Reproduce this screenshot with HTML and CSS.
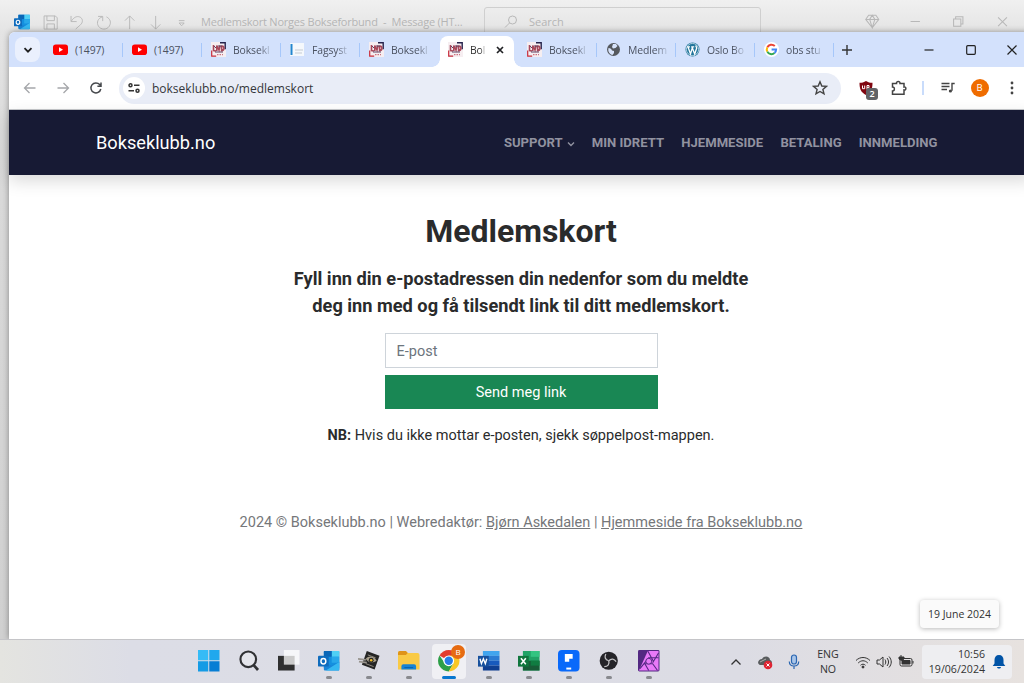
FILE: index.html
```
<!DOCTYPE html>
<html lang="no">
<head>
    <meta charset="utf-8">
    <title>Medlemskort - Bokseklubb.no</title>
    <link rel="stylesheet" href="styles.css">
</head>
<body>
    <svg class="defs" aria-hidden="true">
        <symbol id="youtube" viewBox="0 0 15 15">
            <rect x="0" y="2.5" width="15" height="10.5" rx="2.8" fill="#f00"/>
            <path d="M6 5.3 10 7.7 6 10z" fill="#fff"/>
        </symbol>
        <symbol id="boxing" viewBox="0 0 15 15">
            <path d="M0 0h15v15H0z" fill="#f6eef1"/>
            <path d="M9 .8h5.200v6.500" fill="none" stroke="#25234d" stroke-width="1.400"/>
            <path d="M.7 8.500v5.700h4.500" fill="none" stroke="#c62b3a" stroke-width="1.200"/>
            <path d="M2.500 3v5.500l2.500.5M5.800 9V3.500L8 8l1-4.500M10.600 3.600v5c3 0 3-4.500.5-4.500" fill="none" stroke="#a8485a" stroke-width="1.600"/>
            <path d="M3 4l2 2M7 4h4M4 10h8" stroke="#5d4161"/>
            <path d="M6 12.700h6" stroke="#c05565" stroke-dasharray="1.500 1"/>
        </symbol>
        <symbol id="outlook" viewBox="0 0 22 22">
            <rect x="6" y="1" width="16" height="18" rx="1.2" fill="#1490df"/>
            <path d="M14 1h8v6h-8z" fill="#50d0f5"/>
            <path d="M6 1h8v6H6z" fill="#0a67b7"/>
            <path d="M14 7h8v6h-8z" fill="#28a8ea"/>
            <path d="M6 12l8 4 8-4v8a1 1 0 0 1-1 1H7a1 1 0 0 1-1-1z" fill="#1784d8"/>
            <path d="M22 12v8a1 1 0 0 1-1 1H8z" fill="#35b8f1"/>
            <rect x="0" y="6" width="11" height="11" rx="1" fill="#0f6cbd"/>
            <ellipse cx="5.5" cy="11.5" rx="2.5" ry="2.8" fill="none" stroke="#fff" stroke-width="1.5"/>
        </symbol>
    </svg>

    <div class="desktop">
        <!-- Outlook window in the background -->
        <div class="mail-window">
            <div class="mail-tools">
                <svg class="mail-logo"><use href="#outlook"/></svg>
                <svg viewBox="0 0 16 16"><path d="M1 1h12l2 2v12H1zM4 1v5h8V1M4 15V9.500h8V15"/></svg>
                <svg viewBox="0 0 16 16"><path d="M2 1v6h6M2.300 6.500C5 2.500 8 1 11 2c4 1.500 4 6 1 8.500L7 15"/></svg>
                <svg viewBox="0 0 16 16"><path d="M2 1.500h5v5M6.500 2C2 3.500 0 8 2.500 12s9 4 11.500 0 1-8-3-10"/></svg>
                <svg viewBox="0 0 16 16"><path d="M8 15V1M3 6l5-5 5 5"/></svg>
                <svg viewBox="0 0 16 16"><path d="M8 1v14M3 10l5 5 5-5"/></svg>
                <svg viewBox="0 0 16 16"><path d="M5 6h6M5.300 8.500h5.400L8 11.500z"/></svg>
            </div>
            <div class="mail-title">Medlemskort Norges Bokseforbund&nbsp; -&nbsp; Message (HT...</div>
            <div class="mail-search">
                <svg viewBox="0 0 14 14"><circle cx="8.500" cy="5" r="4"/><path d="M5.500 8 1 12.500"/></svg>
                <span>Search</span>
            </div>
            <div class="mail-controls">
                <svg viewBox="0 0 14 14"><path d="M3.500 1h7L13.300 5 7 13 .7 5zM.7 5h12.600M4.500 5 7 13l2.500-8L7 1z"/></svg>
                <svg viewBox="0 0 14 14"><path d="M2.500 7h9"/></svg>
                <svg viewBox="0 0 14 14"><path d="M2.500 4.500h7v7h-7zM4.500 4V2.500h7v7H10"/></svg>
                <svg viewBox="0 0 14 14"><path d="M3 3l8.500 8.500M11.500 3 3 11.500"/></svg>
            </div>
        </div>

        <div class="browser">
            <div class="tab-strip">
                <button class="tab-search"><svg viewBox="0 0 10 10"><path d="M1.500 3.200 5 6.700l3.500-3.500"/></svg></button>
                <div class="tab"><svg class="favicon"><use href="#youtube"/></svg><span>(1497)</span></div>
                <div class="tab"><svg class="favicon"><use href="#youtube"/></svg><span>(1497)</span></div>
                <div class="tab"><svg class="favicon"><use href="#boxing"/></svg><span class="fade">Boksekl</span></div>
                <div class="tab">
                    <svg class="favicon" viewBox="0 0 15 15"><path d="M0 1h14v13H0z" fill="#f5f8fc"/><path d="M1.500 2v11" stroke="#2386cf" stroke-width="2"/><path d="M5 8h8M5 11h7" stroke="#c5cbd2"/></svg>
                    <span class="fade">Fagsyst</span>
                </div>
                <div class="tab before-active"><svg class="favicon"><use href="#boxing"/></svg><span class="fade">Boksekl</span></div>
                <div class="tab active">
                    <svg class="favicon"><use href="#boxing"/></svg><span class="fade">Bol</span>
                    <svg class="tab-close" viewBox="0 0 8 8"><path d="M1 1l6 6M7 1 1 7"/></svg>
                </div>
                <div class="tab"><svg class="favicon"><use href="#boxing"/></svg><span class="fade">Boksekl</span></div>
                <div class="tab">
                    <svg class="favicon" viewBox="0 0 15 15"><circle cx="7.500" cy="7.500" r="6.500" fill="#55595e"/><path d="M2.500 6c2 .2 3 1 3.500 2.500L8 9v2l-1.500 2C4 12.500 1.500 10 2.500 6zM7 2h3l1.500 2-2 2-2.500.5L6 5z" fill="#d7e3fa"/></svg>
                    <span class="fade">Medlem</span>
                </div>
                <div class="tab">
                    <svg class="favicon" viewBox="0 0 15 15"><circle cx="7.500" cy="7.500" r="7" fill="#21759b"/><circle cx="7.500" cy="7.500" r="6.100" fill="none" stroke="#e8f2f8" stroke-width=".7"/><path d="M2 4.800h3M6.200 4.800h3M3 5l2.500 7L7.300 6M7 5l2.700 7 2-6-1-2.500" fill="none" stroke="#fff" stroke-width="1.300"/></svg>
                    <span class="fade">Oslo Bo</span>
                </div>
                <div class="tab">
                    <svg class="favicon" viewBox="0 0 15 15"><circle cx="7.500" cy="7.500" r="7.500" fill="#fff"/><g fill="none" stroke-width="2"><path d="M10.800 4A4.700 4.700 0 0 0 3.300 5.400" stroke="#ea4335"/><path d="M3.300 5.400a4.700 4.700 0 0 0 0 4.200" stroke="#fbbc05"/><path d="M3.300 9.600a4.700 4.700 0 0 0 7.200 1.500" stroke="#34a853"/><path d="M10.500 11.100c1.200-1 1.600-2.200 1.600-3.500H7.600" stroke="#4285f4"/></g></svg>
                    <span class="fade">obs stu</span>
                </div>
                <svg class="new-tab" viewBox="0 0 12 12"><path d="M6 1v10M1 6h10"/></svg>
                <div class="window-controls">
                    <svg viewBox="0 0 12 12"><path d="M1.500 6h9"/></svg>
                    <svg viewBox="0 0 12 12"><rect x="1.700" y="1.700" width="8.600" height="8.600" rx="1"/></svg>
                    <svg viewBox="0 0 12 12"><path d="M1.500 1.500l9 9M10.500 1.500l-9 9"/></svg>
                </div>
            </div>

            <div class="toolbar">
                <svg class="nav-icon muted" viewBox="0 0 14 14"><path d="M12.500 7h-11M6.500 2l-5 5 5 5"/></svg>
                <svg class="nav-icon muted" viewBox="0 0 14 14"><path d="M1.500 7h11M7.500 2l5 5-5 5"/></svg>
                <svg class="nav-icon" viewBox="0 0 14 14"><path d="M11.800 8A5 5 0 1 1 10.700 3.600L12 5M12 1.500V5.200H8.400"/></svg>
                <div class="address-bar">
                    <div class="site-info"><svg viewBox="0 0 12 12"><circle cx="2.500" cy="3.300" r="1.500"/><path d="M6 3.300h5.500M.5 8.700H6"/><circle cx="9.500" cy="8.700" r="1.500"/></svg></div>
                    <span class="url">bokseklubb.no/medlemskort</span>
                    <svg class="star" viewBox="0 0 16 16"><path d="M8 1.800l1.800 4.200 4.600.4-3.500 3 1.100 4.500L8 11.500l-4 2.400 1.100-4.500-3.500-3 4.600-.4z"/></svg>
                </div>
                <div class="extensions">
                    <div class="ublock">
                        <svg viewBox="0 0 14 14"><path d="M7 0c2 1.300 4 1.800 6.500 1.800C13.500 8 12 11.500 7 14 2 11.500.5 8 .5 1.800 3 1.800 5 1.300 7 0z" fill="#800610"/><path d="M3.500 4.500v3.200h2.200V4.500M8 8.500v-4h2v2.200H8" fill="none" stroke="#fff"/></svg>
                        <span class="badge">2</span>
                    </div>
                    <svg class="puzzle" viewBox="0 0 16 16"><path d="M1.500 3.500h4C5 .8 9.500.8 9 3.500h4V7c2.500-.5 2.500 3.500 0 3v4.200H1.500V11c2.500-.2 2.500-4 0-4z"/></svg>
                    <i class="divider"></i>
                    <svg class="media" viewBox="0 0 14 14"><path d="M.5 2.500h8M.5 5.500h8M.5 8.500H6M11 9.800V2.500h2.700"/><circle cx="9.400" cy="10" r="1.600"/></svg>
                    <div class="avatar">B</div>
                    <svg class="dots" viewBox="0 0 4 14"><circle cx="2" cy="2" r="1.400"/><circle cx="2" cy="7" r="1.400"/><circle cx="2" cy="12" r="1.400"/></svg>
                </div>
            </div>

            <div class="page">
                <header class="site-header">
                    <a class="brand">Bokseklubb.no</a>
                    <nav class="menu">
                        <a>Support <svg viewBox="0 0 8 8"><path d="M1 2.500l3 3 3-3"/></svg></a>
                        <a>Min idrett</a>
                        <a>Hjemmeside</a>
                        <a>Betaling</a>
                        <a>Innmelding</a>
                    </nav>
                </header>
                <main>
                    <h1>Medlemskort</h1>
                    <h2>Fyll inn din e-postadressen din nedenfor som du meldte<br>deg inn med og få tilsendt link til ditt medlemskort.</h2>
                    <form class="card-form">
                        <input type="email" placeholder="E-post">
                        <button type="submit">Send meg link</button>
                    </form>
                    <p class="note"><b>NB:</b> Hvis du ikke mottar e-posten, sjekk søppelpost-mappen.</p>
                </main>
                <footer>2024 © Bokseklubb.no | Webredaktør: <u>Bjørn Askedalen</u> | <u>Hjemmeside fra Bokseklubb.no</u></footer>
            </div>
        </div>

        <div class="date-tooltip">19 June 2024</div>

        <div class="taskbar">
            <div class="apps">
                <div class="app"><svg viewBox="0 0 22 22"><g fill="#159be5"><path d="M0 0h10.500v10.500H0z" fill="#35bbf6"/><path d="M11.500 0H22v10.500H11.500z" fill="#20a8ed"/><path d="M0 11.500h10.500V22H0z"/><path d="M11.500 11.500H22V22H11.500z" fill="#087ed4"/></g></svg></div>
                <div class="app"><svg viewBox="0 0 22 22"><circle cx="10.500" cy="9.500" r="8" fill="#e4e5eb" stroke="#303134" stroke-width="2.200"/><path d="M16 15.500l4.500 5" stroke="#303134" stroke-width="2.800"/></svg></div>
                <div class="app"><svg viewBox="0 0 22 22"><path d="M0 6h17v15H0z" fill="#303030"/><path d="M6 0h16v15H6z" fill="#fff" opacity=".75"/></svg></div>
                <div class="app running"><svg viewBox="0 0 22 22"><use href="#outlook"/></svg></div>
                <div class="app running">
                    <svg viewBox="0 0 22 22"><path d="M9 1l13 5-5 14L4 15z" fill="#252525"/><path d="M8 9c3-4 9-3 11 2-4 3-9 2-11-2z" fill="#a9a08c"/><circle cx="13.500" cy="10.500" r="2.500" fill="#252525"/><circle cx="13.500" cy="10.500" r="1.300" fill="#f4be25"/><path d="M10 5l8 3M8 14l8 3" stroke="#8f8a80"/><path d="M0 9l8 1M1 12l8 1" stroke="#98948e" stroke-width="1.800"/></svg>
                </div>
                <div class="app running"><svg viewBox="0 0 22 22"><path d="M0 3a2 2 0 0 1 2-2h6l2 2h10a2 2 0 0 1 2 2v15H0z" fill="#f9ca45"/><path d="M0 3a2 2 0 0 1 2-2h6l2 2-2 2H0z" fill="#df9419"/><path d="M3.500 20v-3.500a2 2 0 0 1 2-2h11a2 2 0 0 1 2 2V20z" fill="#1684d4"/><path d="M6.500 18h9" stroke="#0761aa"/></svg></div>
                <div class="app running current">
                    <svg viewBox="0 0 22 22"><path d="M11 11 1.500 5.500A11 11 0 0 1 20.500 5.500z" fill="#e33b2e"/><path d="M1.500 5.500A11 11 0 0 0 11 22l5-8.500H7z" fill="#2d9f48"/><path d="M20.500 5.500A11 11 0 0 1 11 22l5-8.500L11 5.500z" fill="#fac724"/><circle cx="11" cy="11" r="5.500" fill="#fff"/><circle cx="11" cy="11" r="4.300" fill="#287ce5"/></svg>
                    <span class="profile-badge">B</span>
                </div>
                <div class="app running"><svg viewBox="0 0 22 22"><path d="M5 1h17v5H5z" fill="#41a5ee"/><path d="M5 6h17v5H5z" fill="#2b7cd3"/><path d="M5 11h17v5H5z" fill="#185abd"/><path d="M5 16h17v5H5z" fill="#103f91"/><path d="M0 6h11v11H0z" fill="#17509d"/><path d="M2 9l1.500 5 2-5 2 5L9 9" fill="none" stroke="#fff" stroke-width="1.400"/></svg></div>
                <div class="app running"><svg viewBox="0 0 22 22"><path d="M5 1h17v20H5z" fill="#21a366"/><path d="M13 1h9v6h-9z" fill="#33c481"/><path d="M5 11h17v10H5z" fill="#185c37"/><path d="M13 11h9v5h-9z" fill="#107c41"/><path d="M0 6h11v11H0z" fill="#10763d"/><path d="M3 8.500l5 6M8 8.500l-5 6" stroke="#fff" stroke-width="1.600"/></svg></div>
                <div class="app running"><svg viewBox="0 0 22 22"><rect width="22" height="22" rx="4" fill="#0969fa"/><path d="M7 4h8v5h-3.500v3H7z" fill="#fff"/><path d="M8.500 19h5" stroke="#fff" stroke-width="2"/></svg></div>
                <div class="app running"><svg viewBox="0 0 22 22"><circle cx="11" cy="11" r="9.300" fill="#252429"/><g fill="none" stroke="#c4c3c6" stroke-width="1.300"><path id="blade" d="M11 11c-4-1-4.500-4-3-7"/><use href="#blade" transform="rotate(120 11 11)"/><use href="#blade" transform="rotate(240 11 11)"/></g></svg></div>
                <div class="app running"><svg viewBox="0 0 22 22"><rect width="22" height="22" rx="1.500" fill="#532882"/><path d="M10 1h11v20H1z" fill="#e879f8"/><path d="M10 1l6 11M2 19l9-11h10M7 14l4 7M7 14h8l5 7M15 13l6-10" fill="none" stroke="#532882" stroke-width="1.100"/><circle cx="11" cy="11.500" r="3" fill="#e879f8" stroke="#532882"/></svg></div>
            </div>
            <div class="tray">
                <svg class="caret" viewBox="0 0 12 12"><path d="M1.500 8.500 6 4l4.500 4.500"/></svg>
                <svg class="cloud" viewBox="0 0 16 16"><path d="M3 11C-1 9 2 5 5 5c2-4 8-3 8 1 3 1 2 5 0 5z" fill="#595c5e"/><path d="M3 8l6-3" stroke="#b0b0b0"/><circle cx="11" cy="11" r="4.300" fill="#df2433"/><path d="M9.500 9.500l3 3M12.500 9.500l-3 3" stroke="#fff"/></svg>
                <svg class="mic" viewBox="0 0 12 16"><rect x="3.500" y="1" width="5" height="9" rx="2.500" fill="#a9c5e8"/><path d="M1.300 7.500c0 6 9.400 6 9.400 0M6 12v3"/></svg>
                <div class="language">ENG<br>NO</div>
                <svg class="wifi" viewBox="0 0 16 16"><path d="M1 6.500c4-4 10-4 14 0M3.200 9c3-3 6.600-3 9.600 0M5.500 11.300c1.500-1.500 3.500-1.500 5 0"/><circle cx="8" cy="13" r="1" fill="#333"/></svg>
                <svg class="volume" viewBox="0 0 16 16"><path d="M1 6h2.500L7 3v10l-3.500-3H1zM9 5.500c1 1.500 1 3.500 0 5M11 4c2 2.500 2 5.500 0 8M13 2.500c3 3.500 3 7.500 0 11"/></svg>
                <svg class="battery" viewBox="0 0 16 16"><rect x="2" y="4.500" width="12" height="7.500" rx="1.500"/><path d="M4 6.500h8v3.500H4z" fill="#333"/><path d="M15 7v2.500M3 1v3M1 3h5v2L3.500 6.500 1 5z" fill="#333"/></svg>
                <div class="clock">
                    <div>10:56<br>19/06/2024</div>
                    <svg viewBox="0 0 14 16"><path d="M7 1c3 0 4.500 2 4.500 5v3.500l1.800 2.500H.7l1.800-2.500V6C2.500 3 4 1 7 1z"/><path d="M5 13h4c-.3 2-3.700 2-4 0z"/></svg>
                </div>
            </div>
        </div>
    </div>
</body>
</html>
```
FILE: styles.css
```
* {
    box-sizing: border-box;
}
body {
    margin: 0;
    font-family: "Open Sans", "Noto Sans", sans-serif;
    overflow: hidden;
}
svg {
    flex: none;
    fill: none;
    stroke: none;
}
.defs {
    display: none;
}
.desktop {
    position: relative;
    height: 683px;
    overflow: hidden;
    background: #d5d5d5;
    display: flex;
    flex-direction: column;
    justify-content: flex-end;
}

/* Outlook */
.mail-window {
    position: absolute;
    left: 0;
    top: 0;
    width: 1024px;
    height: 639px;
    display: flex;
    align-items: flex-start;
    padding: 7px 14px 0;
    background: linear-gradient(#f0f0f0, #e4e4e4 32px, #dadada 150px, #d0d0d0);
    color: #b5b5b5;
    font-size: 11px;
    line-height: 30px;
}
.mail-window svg {
    stroke: #b8b8b8;
    height: 15px;
}
.mail-tools {
    display: flex;
    align-items: center;
    height: 30px;
    width: 187px;
    gap: 11px;
}
.mail-tools svg {
    width: 15.3px;
}
.mail-tools .mail-logo {
    width: 16px;
    height: 16px;
    margin-right: 2px;
    stroke: none;
}
.mail-title {
    width: 283px;
    white-space: nowrap;
    letter-spacing: -0.21px;
}
.mail-search {
    width: 277px;
    height: 30px;
    border: 1px solid #cfcfcf;
    border-radius: 3px;
    display: flex;
    align-items: center;
    padding-left: 19px;
    gap: 11px;
}
.mail-search svg {
    width: 14px;
    height: 14px;
}
.mail-controls {
    display: flex;
    align-items: center;
    height: 29px;
    gap: 28.7px;
    margin-left: 104px;
}
.mail-controls svg {
    width: 14.5px;
}

/* Browser window */
.browser {
    position: absolute;
    left: 9px;
    top: 32px;
    width: 1024px;
    height: 607px;
    display: flex;
    flex-direction: column;
    background: #fff;
    border-radius: 6px 6px 0 0;
    box-shadow: 0 0 6px rgba(0, 0, 0, 0.38);
}
.tab-strip {
    height: 35px;
    display: flex;
    align-items: center;
    background: #d3e1fc;
    border-radius: 6px 6px 0 0;
    padding-left: 6px;
}
.tab-search {
    width: 25px;
    height: 25px;
    border: 0;
    border-radius: 8px;
    background: #eaf0fd;
    padding: 0;
    margin-right: 5px;
    display: flex;
    align-items: center;
    justify-content: center;
}
.tab-search svg {
    width: 10px;
    height: 10px;
    stroke: #1f1f1f;
    stroke-width: 1.8;
}
.tab {
    position: relative;
    width: 79px;
    height: 31px;
    margin-top: 4px;
    padding: 0 0 4px 8px;
    display: flex;
    align-items: center;
    gap: 7px;
    flex: none;
    color: #4b5261;
    font-size: 10.4px;
    letter-spacing: -0.1px;
    white-space: nowrap;
}
.tab::after {
    content: "";
    position: absolute;
    right: 1px;
    top: 7px;
    width: 1.5px;
    height: 14px;
    background: #a6c7fa;
}
.tab.active::after,
.tab.before-active::after {
    display: none;
}
.fade {
    -webkit-mask-image: linear-gradient(90deg, #000 70%, rgba(0, 0, 0, 0.2));
    mask-image: linear-gradient(90deg, #000 70%, rgba(0, 0, 0, 0.2));
}
.favicon {
    width: 15px;
    height: 15px;
}
.tab.active {
    width: 74px;
    margin-right: 5px;
    background: #fff;
    border-radius: 8px 8px 0 0;
}
.tab.active::before {
    content: "";
    position: absolute;
    left: -8px;
    right: -8px;
    bottom: 0;
    height: 8px;
    background:
        radial-gradient(circle at 0 0, transparent 7.5px, #fff 8px) left / 8px 8px no-repeat,
        radial-gradient(circle at 100% 0, transparent 7.5px, #fff 8px) right / 8px 8px no-repeat;
}
.tab.active span {
    color: #333;
}
.tab-close {
    width: 8px;
    height: 8px;
    margin-left: auto;
    margin-right: 10px;
    stroke: #202124;
    stroke-width: 1.7;
}
.new-tab {
    width: 12px;
    height: 12px;
    stroke: #333;
    stroke-width: 1.4;
    margin-left: 6px;
}
.window-controls {
    display: flex;
    gap: 29.5px;
    margin-left: 70px;
}
.window-controls svg {
    width: 12px;
    height: 12px;
    stroke: #222;
    stroke-width: 1.2;
}
.toolbar {
    height: 43px;
    display: flex;
    align-items: center;
    padding-left: 14px;
    border-bottom: 1px solid #c6c8cb;
}
.nav-icon {
    width: 14px;
    height: 14px;
    margin-right: 19px;
    stroke: #45484c;
    stroke-width: 1.5;
}
.nav-icon.muted {
    stroke: #a5a7aa;
    stroke-width: 1.3;
}
.address-bar {
    width: 722px;
    height: 31px;
    margin-left: -3px;
    display: flex;
    align-items: center;
    padding: 0 13px 0 4px;
    border-radius: 16px;
    background: #e9edf7;
    color: #34363a;
    font-size: 12px;
}
.site-info {
    width: 22px;
    height: 22px;
    border-radius: 50%;
    background: #fff;
    display: flex;
    align-items: center;
    justify-content: center;
    margin-right: 7px;
}
.site-info svg {
    width: 12px;
    height: 12px;
    stroke: #333;
    stroke-width: 1.5;
}
.url {
    flex: 1;
}
.star {
    width: 16px;
    height: 16px;
    stroke: #444;
    stroke-width: 1.4;
}
.extensions {
    display: flex;
    align-items: center;
    margin-left: 18px;
}
.ublock {
    position: relative;
    width: 14px;
    height: 14px;
    margin-right: 18px;
}
.ublock svg {
    display: block;
}
.badge {
    position: absolute;
    left: 7px;
    top: 7px;
    width: 12px;
    height: 12px;
    border-radius: 3px;
    background: #616366;
    color: #fff;
    font-size: 9px;
    font-weight: 600;
    line-height: 12px;
    text-align: center;
}
.puzzle {
    width: 16px;
    height: 16px;
    stroke: #444;
    stroke-width: 1.5;
}
.divider {
    width: 1.5px;
    height: 14px;
    background: #c9dcfb;
    margin: 0 17px 0 15px;
}
.media {
    width: 14px;
    height: 14px;
    stroke: #444;
    stroke-width: 1.4;
}
.media circle,
.dots circle {
    fill: #444;
    stroke: none;
}
.avatar {
    width: 18px;
    height: 18px;
    border-radius: 50%;
    background: #ef6c00;
    color: #fff;
    font-size: 9.5px;
    line-height: 18px;
    text-align: center;
    margin: 0 21px 0 16px;
}
.dots {
    width: 4px;
    height: 14px;
}

/* bokseklubb.no */
.page {
    flex: 1;
    font-family: Roboto, sans-serif;
    color: #2a2b2c;
    font-size: 14.5px;
    text-align: center;
}
.site-header {
    height: 65px;
    background: #171a34;
    box-shadow: 0 6px 16px rgba(0, 0, 0, 0.15);
    display: flex;
    align-items: center;
    justify-content: space-between;
    padding: 0 95.5px 0 87px;
}
.brand {
    color: #fff;
    font-size: 18.2px;
}
.menu {
    display: flex;
    gap: 17.2px;
    color: #9192a0;
    font-size: 13.1px;
    font-weight: 700;
    text-transform: uppercase;
}
.menu svg {
    width: 8px;
    height: 8px;
    stroke: #9192a0;
    stroke-width: 1.4;
    vertical-align: -1px;
    margin-left: 1px;
}
main {
    padding-top: 36px;
}
h1 {
    margin: 0 0 14px;
    font-size: 32px;
    line-height: 40px;
    font-weight: 700;
}
h2 {
    margin: 0 0 14px;
    font-size: 18.2px;
    line-height: 27px;
    font-weight: 700;
}
.card-form {
    width: 273px;
    margin: 0 auto;
    display: flex;
    flex-direction: column;
    gap: 7px;
}
.card-form input {
    height: 35px;
    border: 1px solid #ced4da;
    padding: 1px 11px 0;
    font: inherit;
}
.card-form input::placeholder {
    color: #6c757d;
}
.card-form button {
    height: 34px;
    border: 0;
    background: #198754;
    color: #fff;
    font: inherit;
}
.note {
    margin: 16px 0 65px;
    line-height: 22px;
}
footer {
    color: #75777a;
    line-height: 22px;
}

/* Taskbar */
.date-tooltip {
    position: absolute;
    left: 920px;
    top: 600px;
    width: 79px;
    height: 28px;
    border-radius: 4px;
    background: #fafafa;
    box-shadow: 0 1px 5px rgba(0, 0, 0, 0.28);
    color: #333;
    font-size: 10.5px;
    line-height: 28px;
    text-align: center;
}
.taskbar {
    position: relative;
    height: 44px;
    border-top: 1px solid #c5c5c8;
    background: linear-gradient(90deg, #e4e4e0, #dcdde6 130px, #dcdce4 740px, #e7e2df);
    display: flex;
    justify-content: space-between;
    padding: 0 12px 0 192px;
}
.apps {
    display: flex;
    gap: 6px;
    padding-top: 4px;
}
.app {
    position: relative;
    width: 34px;
    height: 35px;
    padding-top: 6px;
    text-align: center;
    border-radius: 4px;
}
.app svg {
    width: 21.5px;
    height: 21.5px;
}
.app.running::after {
    content: "";
    position: absolute;
    left: 14px;
    bottom: 0;
    width: 6px;
    height: 3px;
    border-radius: 2px;
    background: #88898e;
}
.app.current {
    background: #f0f0f4;
}
.app.current::after {
    left: 10px;
    width: 14px;
    background: #0877cf;
}
.profile-badge {
    position: absolute;
    right: 1px;
    top: 1px;
    width: 14px;
    height: 14px;
    border-radius: 50%;
    background: #e66b12;
    color: #fff;
    font-size: 8px;
    line-height: 14px;
}
.tray {
    display: flex;
    align-items: center;
    color: #333;
    font-size: 10.6px;
    line-height: 14.5px;
}
.tray svg {
    stroke: #333;
    height: 16px;
}
.tray .caret {
    width: 12px;
    height: 12px;
    margin-right: 15px;
    stroke-width: 1.3;
}
.tray .cloud {
    width: 16px;
    margin-right: 15px;
    stroke: none;
}
.tray .mic {
    width: 12px;
    margin-right: 16px;
    stroke: #2c67b2;
    stroke-width: 1.2;
}
.language {
    width: 24px;
    text-align: center;
    margin-right: 15px;
}
.tray .wifi {
    width: 16px;
    margin-right: 5px;
}
.tray .volume {
    width: 16px;
    margin-right: 6px;
}
.tray .battery {
    width: 16px;
    margin-right: 8px;
}
.clock {
    width: 90px;
    height: 34px;
    border-radius: 4px;
    background: #eeeef1;
    display: flex;
    align-items: center;
    justify-content: flex-end;
    gap: 7px;
    padding-right: 6px;
    text-align: right;
}
.tray .clock svg {
    width: 14px;
    fill: #0053a6;
    stroke: none;
}
```
